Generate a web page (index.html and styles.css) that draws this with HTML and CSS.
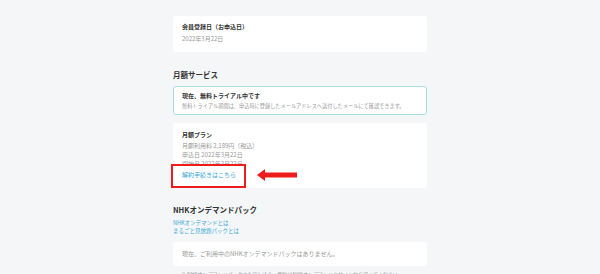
FILE: index.html
```html
<!DOCTYPE html>
<html lang="ja">
<head>
  <meta charset="UTF-8" />
  <meta name="viewport" content="width=device-width, initial-scale=1" />
  <title>契約情報</title>
  <link rel="stylesheet" href="styles.css">
</head>
<body>
  <main class="column">

    <div class="card info">
      <div class="label">会員登録日（お申込日）</div>
      <div class="value">2022年3月22日</div>
    </div>

    <h2 class="section-title">月額サービス</h2>

    <div class="notice">
      <div class="notice-title">現在、無料トライアル中です</div>
      <div class="notice-text">無料トライアル期間は、申込時に登録したメールアドレスへ送付したメールにて確認できます。</div>
    </div>

    <div class="card plan">
      <div class="label">月額プラン</div>
      <div class="detail">月額利用料 2,189円（税込）</div>
      <div class="detail">申込日 2022年3月22日</div>
      <div class="detail">開始日 2022年3月22日</div>
      <a href="#" class="link cancel">解約手続きはこちら</a>

      <!-- annotation over the screenshot -->
      <div class="highlight"></div>
      <svg class="arrow" width="40" height="12" viewBox="0 0 40 12">
        <polygon points="0,6 8,0 8,3.5 40,3.5 40,8.5 8,8.5 8,12" fill="#ee1c1c" />
      </svg>
    </div>

    <h2 class="section-title nhk">NHKオンデマンドパック</h2>
    <a href="#" class="link small">NHKオンデマンドとは</a>
    <a href="#" class="link small">まるごと見放題パックとは</a>

    <div class="card empty">
      <div class="value">現在、ご利用中のNHKオンデマンドパックはありません。</div>
    </div>

    <div class="footnote">※ NHKオンデマンドパックのお申し込み・解約はNHKオンデマンドのサイトから行ってください。</div>
  </main>
</body>
</html>
```

FILE: styles.css
```css
body {
  margin: 0;
  background: #f5f6f8;
  color: #333;
  font-family: "Noto Sans CJK JP", "Noto Sans", sans-serif;
}
.column {
  width: 254px;
  margin: 0 auto;
  padding-top: 16px;
}
.card {
  background: #fff;
  border-radius: 3px;
  padding: 0 9px;
}
.info {
  padding-top: 5px;
  padding-bottom: 7px;
}
.label {
  font-size: 6px;
  font-weight: bold;
  line-height: 12px;
}
.value {
  font-size: 6px;
  color: #999;
  line-height: 12px;
}
.section-title {
  margin: 17px 0 5px;
  font-size: 7.5px;
  line-height: 12px;
  font-weight: bold;
}
.notice {
  background: #fff;
  border: 1px solid #a9dfe9;
  border-radius: 3px;
  padding: 4px 8px 3px;
}
.notice-title {
  font-size: 6px;
  font-weight: bold;
  line-height: 10px;
}
.notice-text {
  font-size: 5.2px;
  color: #999;
  line-height: 10px;
  white-space: nowrap;
}
.plan {
  position: relative;
  margin-top: 8px;
  padding-top: 6px;
  padding-bottom: 8px;
}
.detail {
  font-size: 6px;
  color: #999;
  line-height: 9px;
}
.link {
  display: block;
  color: #35a8d8;
  text-decoration: none;
}
.cancel {
  margin-top: 2px;
  font-size: 6px;
  line-height: 10px;
}
.highlight {
  position: absolute;
  left: -2px;
  top: 41px;
  width: 71px;
  height: 20px;
  border: 2px solid #ee1c1c;
  background: #fff;
}
.highlight + .arrow {
  position: absolute;
  left: 84px;
  top: 46px;
}
.plan .cancel {
  position: relative;
  z-index: 1;
}
.nhk {
  margin-top: 16px;
  margin-bottom: 3px;
}
.small {
  font-size: 5.5px;
  line-height: 8px;
}
.empty {
  margin-top: 7px;
  padding-top: 7px;
  padding-bottom: 7px;
}
.empty .value {
  line-height: 10px;
}
.footnote {
  margin-top: 3px;
  padding-left: 8px;
  font-size: 5px;
  color: #999;
  line-height: 10px;
  white-space: nowrap;
}
```
